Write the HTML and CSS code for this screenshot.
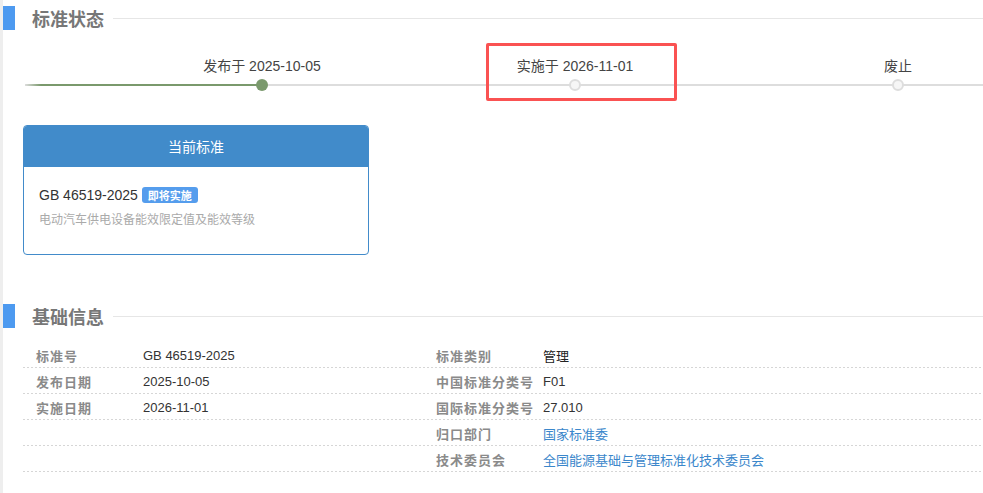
FILE: index.html
```html
<!DOCTYPE html>
<html lang="zh-CN">
<head>
<meta charset="utf-8">
<title>标准状态</title>
<link rel="stylesheet" href="styles.css">
</head>
<body>
<section class="section">
  <div class="section-head">
    <span class="bar"></span>
    <h2 class="title">标准状态</h2>
    <span class="rule"></span>
  </div>
  <div class="timeline">
    <div class="tl-item tl-first">
      <div class="tl-label">发布于 2025-10-05</div>
      <div class="tl-dot-row"><span class="dot dot-done"></span></div>
    </div>
    <div class="tl-item tl-second">
      <div class="tl-label">实施于 2026-11-01</div>
      <div class="tl-dot-row"><span class="dot dot-todo"></span></div>
      <span class="highlight"></span>
    </div>
    <div class="tl-item tl-third">
      <div class="tl-label">废止</div>
      <div class="tl-dot-row"><span class="dot dot-todo"></span></div>
    </div>
  </div>
  <div class="card">
    <div class="card-head">当前标准</div>
    <div class="card-body">
      <div class="card-code">GB 46519-2025<span class="badge">即将实施</span></div>
      <div class="card-desc">电动汽车供电设备能效限定值及能效等级</div>
    </div>
  </div>
</section>
<section class="section section-info">
  <div class="section-head">
    <span class="bar"></span>
    <h2 class="title">基础信息</h2>
    <span class="rule"></span>
  </div>
  <div class="info">
    <div class="info-col info-left">
      <div class="row"><span class="label">标准号</span><span class="value">GB 46519-2025</span></div>
      <div class="row"><span class="label">发布日期</span><span class="value">2025-10-05</span></div>
      <div class="row"><span class="label">实施日期</span><span class="value">2026-11-01</span></div>
      <div class="row"><span class="label"></span><span class="value"></span></div>
      <div class="row"><span class="label"></span><span class="value"></span></div>
    </div>
    <div class="info-col info-right">
      <div class="row"><span class="label">标准类别</span><span class="value value-cn">管理</span></div>
      <div class="row"><span class="label">中国标准分类号</span><span class="value">F01</span></div>
      <div class="row"><span class="label">国际标准分类号</span><span class="value">27.010</span></div>
      <div class="row"><span class="label">归口部门</span><span class="value"><a class="link" href="#">国家标准委</a></span></div>
      <div class="row"><span class="label">技术委员会</span><span class="value"><a class="link" href="#">全国能源基础与管理标准化技术委员会</a></span></div>
    </div>
  </div>
</section>
</body>
</html>
```

FILE: styles.css
```css
* { box-sizing: border-box; }

html, body {
  margin: 0;
  padding: 0;
  background: #fff;
}

body {
  width: 983px;
  height: 493px;
  overflow: hidden;
  border-left: 3px solid #eeeeee;
  font-family: "Liberation Sans", "Noto Sans CJK SC", sans-serif;
  color: #333;
  font-size: 14px;
}

.section {
  padding-top: 6px;
}

.section-head {
  display: flex;
  align-items: center;
  height: 24px;
}

.bar {
  width: 12px;
  height: 24px;
  background: #4d9af0;
  flex: none;
}

.title {
  margin: 0 0 0 17px;
  font-size: 18px;
  line-height: 24px;
  font-weight: bold;
  color: #777;
  font-family: "Noto Sans CJK SC", "Liberation Sans", sans-serif;
}

.rule {
  flex: 1;
  height: 1px;
  background: #e6e6e6;
  margin-left: 9px;
}

/* timeline */
.timeline {
  position: relative;
  display: flex;
  margin: 26px 0 0 22px;
  height: 36px;
  background:
    linear-gradient(to right, rgba(122, 153, 108, 0), #7a996c 16px) 0 28px / 237px 2px no-repeat,
    linear-gradient(#dddddd, #dddddd) 0 28px / 100% 2px no-repeat;
}

.tl-item {
  position: relative;
  width: 160px;
  flex: none;
  text-align: center;
}

.tl-first { margin-left: 157px; }
.tl-second { margin-left: 153px; }
.tl-third { margin-left: 163px; }

.tl-label {
  height: 20px;
  line-height: 20px;
  font-size: 14px;
  color: #444;
  white-space: nowrap;
}

.tl-dot-row {
  margin-top: 2px;
  height: 14px;
  display: flex;
  align-items: center;
  justify-content: center;
}

.dot {
  display: block;
  border-radius: 50%;
}

.dot-done {
  width: 12px;
  height: 12px;
  background: #7a996c;
}

.dot-todo {
  width: 12px;
  height: 12px;
  background: #f6f6f6;
  border: 2px solid #dddddd;
}

.highlight {
  position: absolute;
  left: -9px;
  top: -13px;
  width: 191px;
  height: 58px;
  border: 3px solid #fa5252;
  border-radius: 2px;
  pointer-events: none;
}

/* card */
.card {
  margin: 33px 0 0 20px;
  width: 346px;
  border: 1px solid #428bca;
  border-radius: 4px;
  overflow: hidden;
}

.card-head {
  height: 41px;
  line-height: 40px;
  background: #418bca;
  color: #fff;
  text-align: center;
  font-size: 14px;
  font-family: "Noto Sans CJK SC", "Liberation Sans", sans-serif;
}

.card-body {
  padding: 18px 15px 25px 15px;
}

.card-code {
  display: flex;
  align-items: center;
  height: 20px;
  font-size: 14px;
  color: #333;
}

.badge {
  margin-left: 4px;
  height: 16px;
  line-height: 16px;
  padding: 0 6px;
  font-size: 11px;
  font-weight: bold;
  color: #fff;
  background: #559ded;
  border-radius: 3px;
  font-family: "Noto Sans CJK SC", "Liberation Sans", sans-serif;
}

.card-desc {
  margin-top: 4px;
  height: 20px;
  line-height: 20px;
  font-size: 12px;
  color: #aaa;
  font-family: "Noto Sans CJK SC", "Liberation Sans", sans-serif;
}

/* info */
.section-info {
  margin-top: 43px;
}

.info {
  display: grid;
  grid-template-columns: 400px 1fr;
  margin: 14px 0 0 20px;
}

.row {
  display: flex;
  align-items: center;
  height: 26px;
  background: linear-gradient(to right, #d6d6d6 50%, transparent 50%) left bottom / 4px 1px repeat-x;
}

.label {
  width: 120px;
  flex: none;
  padding-left: 13px;
  font-size: 13px;
  font-weight: bold;
  letter-spacing: 1px;
  color: #8a8a8a;
  font-family: "Noto Sans CJK SC", "Liberation Sans", sans-serif;
  white-space: nowrap;
}

.value {
  font-size: 13px;
  color: #333;
  white-space: nowrap;
}

.value-cn {
  color: #222;
  font-family: "Noto Sans CJK SC", "Liberation Sans", sans-serif;
}

.link {
  color: #3b87cb;
  text-decoration: none;
  font-family: "Noto Sans CJK SC", "Liberation Sans", sans-serif;
}
```
